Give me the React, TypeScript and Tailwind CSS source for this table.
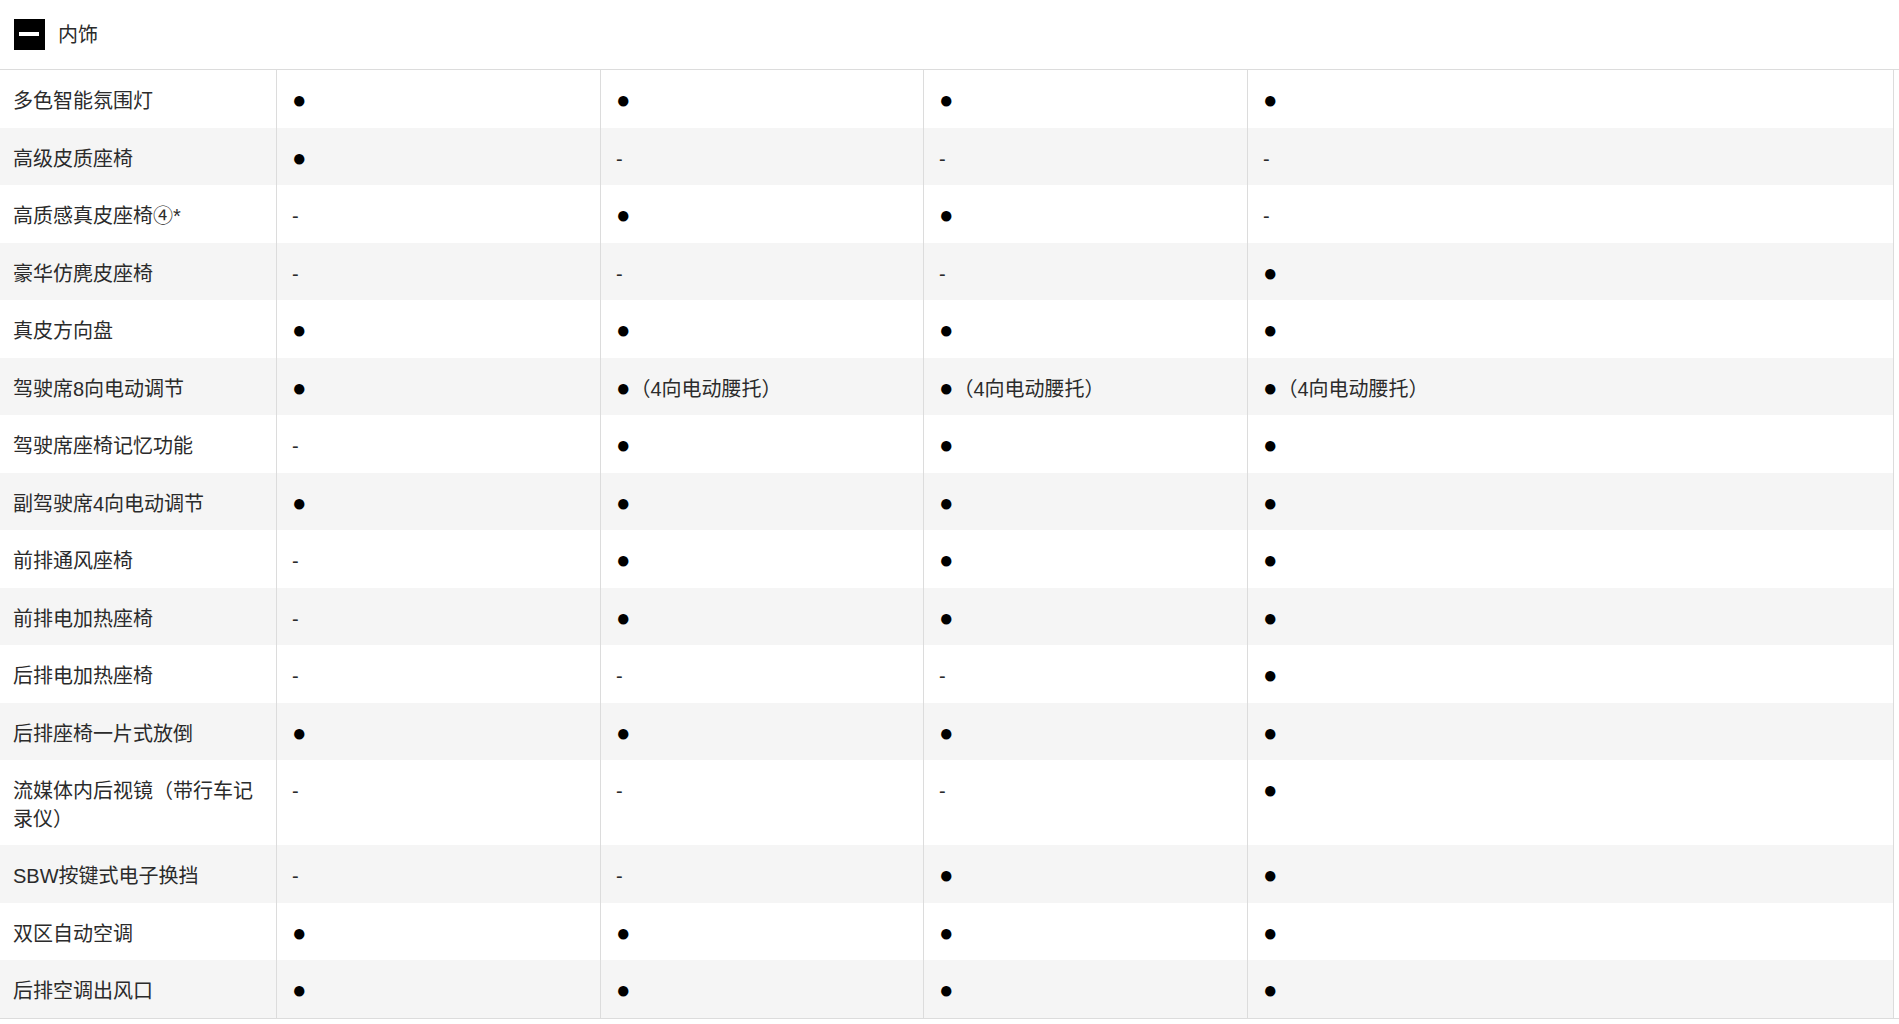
const rows: { name: string; values: string[] }[] = [
    { name: "多色智能氛围灯", values: ["●", "●", "●", "●"] },
    { name: "高级皮质座椅", values: ["●", "-", "-", "-"] },
    { name: "高质感真皮座椅④*", values: ["-", "●", "●", "-"] },
    { name: "豪华仿麂皮座椅", values: ["-", "-", "-", "●"] },
    { name: "真皮方向盘", values: ["●", "●", "●", "●"] },
    { name: "驾驶席8向电动调节", values: ["●", "●（4向电动腰托）", "●（4向电动腰托）", "●（4向电动腰托）"] },
    { name: "驾驶席座椅记忆功能", values: ["-", "●", "●", "●"] },
    { name: "副驾驶席4向电动调节", values: ["●", "●", "●", "●"] },
    { name: "前排通风座椅", values: ["-", "●", "●", "●"] },
    { name: "前排电加热座椅", values: ["-", "●", "●", "●"] },
    { name: "后排电加热座椅", values: ["-", "-", "-", "●"] },
    { name: "后排座椅一片式放倒", values: ["●", "●", "●", "●"] },
    { name: "流媒体内后视镜（带行车记录仪）", values: ["-", "-", "-", "●"] },
    { name: "SBW按键式电子换挡", values: ["-", "-", "●", "●"] },
    { name: "双区自动空调", values: ["●", "●", "●", "●"] },
    { name: "后排空调出风口", values: ["●", "●", "●", "●"] },
];

function Value({ v }: { v: string }) {
    if (!v.startsWith("●")) return <>{v}</>;
    return (
        <>
            <span className="text-[24px] leading-none text-black">●</span>
            {v.slice(1)}
        </>
    );
}

export default function App() {
    return (
        <div className="w-[1899px] bg-white font-['Liberation_Sans','Noto_Sans_CJK_SC',sans-serif] text-[20px] text-[#2b2b2b]">
            {/* Section header */}
            <div className="flex h-[70px] items-center border-b border-[#dcdcdc] pl-[14px]">
                <svg className="h-[31px] w-[31px]" viewBox="0 0 31 31">
                    <rect width="31" height="31" fill="#000" />
                    <rect x="5" y="13" width="20" height="4" fill="#fff" />
                </svg>
                <span className="ml-[13px] pt-[2px] leading-[31px]">内饰</span>
            </div>

            {/* Spec table */}
            <div className="border-b border-[#dcdcdc]">
                {rows.map((row, i) => (
                    <div
                        key={row.name}
                        className={`grid w-[1894px] grid-cols-[276px_324px_323px_324px_647px] ${i % 2 === 1 ? "bg-[#f5f5f5]" : "bg-white"}`}
                    >
                        <div className="pl-[13px] pr-[14px] pt-[18px] pb-[12px] leading-[27.5px]">{row.name}</div>
                        {row.values.map((v, j) => (
                            <div
                                key={j}
                                className={`border-l border-[#dcdcdc] pl-[15px] pt-[18px] pb-[12px] leading-[27.5px] ${j === 3 ? "border-r" : ""}`}
                            >
                                <Value v={v} />
                            </div>
                        ))}
                    </div>
                ))}
            </div>
        </div>
    );
}
